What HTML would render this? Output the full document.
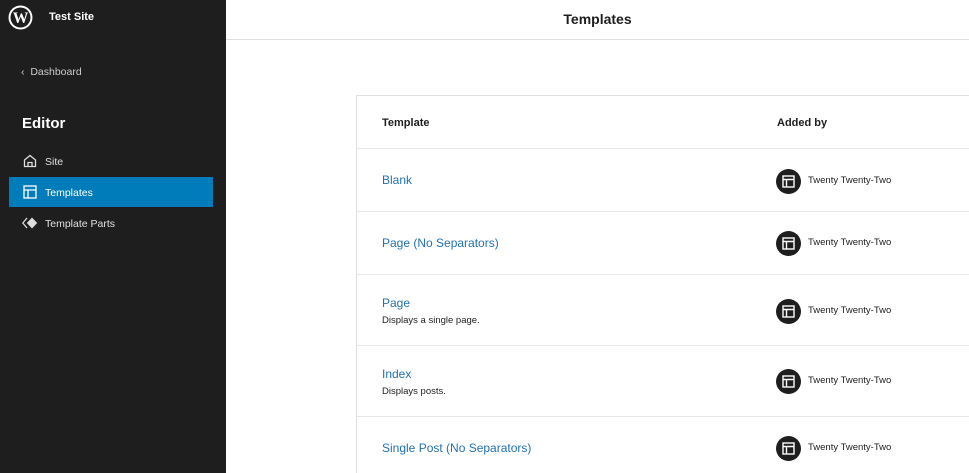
<!DOCTYPE html>
<html style="width:969px;height:473px;overflow:hidden"><head><style>
*{margin:0;padding:0;box-sizing:border-box}
body{width:969px;height:473px;overflow:hidden;font-family:"Liberation Sans",sans-serif;background:#fff;position:relative}
.sb{position:absolute;left:0;top:0;width:226px;height:473px;background:#1e1e1e;color:#e0e0e0}
.abs{position:absolute}
.hdr{position:absolute;left:226px;top:0;right:0;height:40px;border-bottom:1px solid #e0e0e0;text-align:center;font-size:14px;font-weight:bold;line-height:38px;color:#1e1e1e}
.tbl{position:absolute;left:356px;top:95px;width:613px;height:378px;border:1px solid #e0e0e0;border-bottom:none;border-right:none;overflow:hidden}
.row{position:absolute;left:0;right:0;border-bottom:1px solid #e8e8e8}
.name{position:absolute;left:25px;color:#2271b1;font-size:12px;white-space:nowrap}
.desc{position:absolute;left:25px;color:#1e1e1e;font-size:9.5px;white-space:nowrap}
</style></head><body>
<div class="sb">
  <svg class="abs" style="left:8px;top:5px" width="25" height="25" viewBox="0 0 24 24"><circle cx="12" cy="12" r="11.5" fill="#fff"/><circle cx="12" cy="12" r="9.6" fill="#1e1e1e"/><text x="12" y="17.5" text-anchor="middle" font-family="Liberation Serif" font-weight="bold" font-size="15" fill="#fff">W</text></svg>
  <div class="abs" style="left:49px;top:11px;font-size:11px;color:#fff;font-weight:bold">Test Site</div>
  <div class="abs" style="left:21px;top:66px;font-size:10.5px;color:#ccc">‹&nbsp; Dashboard</div>
  <div class="abs" style="left:22px;top:115px;font-size:15px;color:#fff;font-weight:bold">Editor</div>
  <svg class="abs" style="left:23px;top:154px" width="14" height="14" viewBox="0 0 14 14"><path d="M1.5 6L7 1.5 12.5 6V12.5H1.5Z M5 12.5V8.5H9V12.5" fill="none" stroke="#ddd" stroke-width="1.3"/></svg>
  <div class="abs" style="left:45px;top:156px;font-size:10.5px">Site</div>
  <div class="abs" style="left:9px;top:177px;width:204px;height:30px;background:#007cba"></div>
  <svg class="abs" style="left:23px;top:185px" width="14" height="14" viewBox="0 0 14 14"><rect x="1" y="1" width="12" height="12" fill="none" stroke="#fff" stroke-width="1.3"/><path d="M1 5H13M5 5V13" stroke="#fff" stroke-width="1.3"/></svg>
  <div class="abs" style="left:45px;top:187px;font-size:10.5px;color:#fff">Templates</div>
  <svg class="abs" style="left:22px;top:216px" width="16" height="14" viewBox="0 0 16 14"><path d="M5 2L0.8 7 5 12" fill="none" stroke="#ddd" stroke-width="1.3"/><path d="M10 1.5L15.2 7 10 12.5 4.8 7Z" fill="#ddd"/></svg>
  <div class="abs" style="left:45px;top:218px;font-size:10.5px">Template Parts</div>
</div>
<div class="hdr">Templates</div>
<div class="tbl">
  <div class="row" style="top:0;height:53px"><div class="abs" style="left:25px;top:21px;font-size:11px;font-weight:bold;color:#1e1e1e">Template</div><div class="abs" style="left:420px;top:21px;font-size:11px;font-weight:bold;color:#1e1e1e">Added by</div></div>
  <div class="row" style="top:53px;height:63px"><div class="name" style="top:24px">Blank</div></div>
  <div class="row" style="top:116px;height:63px"><div class="name" style="top:24px">Page (No Separators)</div></div>
  <div class="row" style="top:179px;height:71px"><div class="name" style="top:21px">Page</div><div class="desc" style="top:40px">Displays a single page.</div></div>
  <div class="row" style="top:250px;height:71px"><div class="name" style="top:21px">Index</div><div class="desc" style="top:40px">Displays posts.</div></div>
  <div class="row" style="top:321px;height:57px;border:none"><div class="name" style="top:24px">Single Post (No Separators)</div></div>
</div>
<div id="avs"></div>
<script>
var ys=[181,243,311,381,448],h='';
ys.forEach(function(y){h+='<svg class="abs" style="left:776px;top:'+(y-12)+'px" width="25" height="25" viewBox="0 0 25 25"><circle cx="12.5" cy="12.5" r="12.5" fill="#1e1e1e"/><rect x="7" y="7" width="11" height="11" fill="none" stroke="#fff" stroke-width="1.4"/><path d="M7 10.5H18M10.5 10.5V18" stroke="#fff" stroke-width="1.4"/></svg><div class="abs" style="left:808px;top:'+(y-6)+'px;font-size:9.5px;color:#1e1e1e;white-space:nowrap">Twenty Twenty-Two</div>';});
document.getElementById('avs').innerHTML=h;
</script>
</body></html>
